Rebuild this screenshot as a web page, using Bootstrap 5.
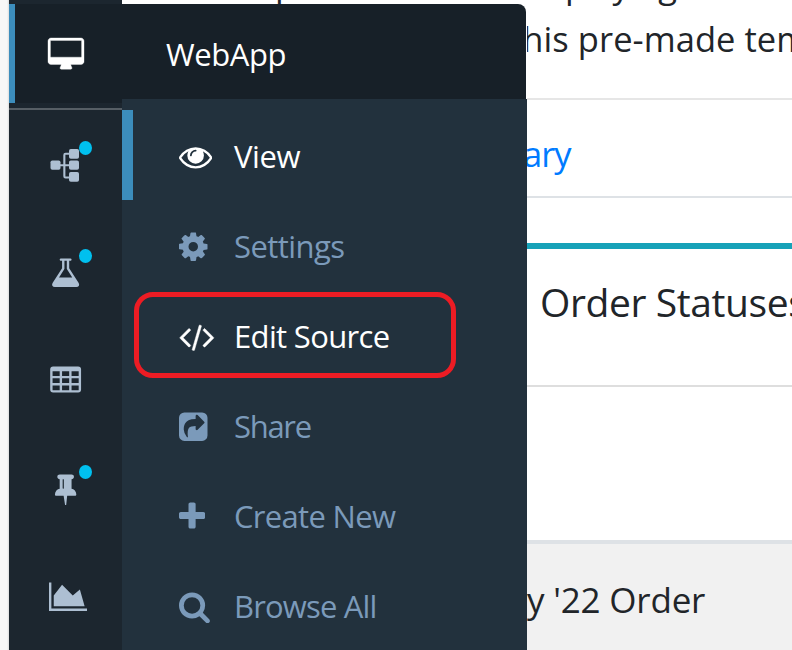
<!DOCTYPE html>
<html lang="en">
<head>
<meta charset="utf-8">
<meta name="viewport" content="width=device-width, initial-scale=1">
<title>WebApp</title>
<link href="https://cdn.jsdelivr.net/npm/bootstrap@5.3.0/dist/css/bootstrap.min.css" rel="stylesheet">
<style>
body{font-family:"Open Sans","Noto Sans",sans-serif;color:#212529;background:#fff;width:792px;height:650px;overflow:hidden}
.gutter{width:9px;background:linear-gradient(90deg,#f7f7f7 7px,#dcdddd)}
.rail{width:113px;background:#1c262f;color:#adbfd2;padding-top:4px}
.rail-item{height:108px;padding-left:1px;padding-top:1px}
.rail-active{height:99px;background:#172028;border-left:6px solid #3c8dbc;color:#fff;padding-right:5px}
.rail-active svg{stroke:#fff;stroke-width:20px;overflow:visible}
.rail-line{height:2px;background:#565e65;margin:5px 0 0}
.dot{position:absolute;left:70px;top:31px;width:13px;height:14px;border-radius:50%;background:#00c0ef}
svg{fill:currentColor;display:block}
.flyout{position:absolute;left:122px;top:4px;width:405px;height:646px;background:#22313d;border-top-right-radius:8px}
.fly-wrap{background:#fff;height:95px}
.fly-head{width:404px;height:95px;background:#172028;border-top-right-radius:8px;color:#fff;padding-left:44px;padding-top:6px}
.fly-list{padding-top:11px}
.fly-item{height:90px;color:#7b9aba;border-left:11px solid transparent;padding-left:46px;font-size:31px}
.fly-item.current{border-left-color:#3c8dbc}
.fly-item.lit{color:#fff}
.fly-item .ico{width:55px;padding-top:3px}
.fly-item .ico svg{height:33.25px}
.fly-item .label{padding-top:3px}
.ring{position:absolute;left:12px;top:288px;width:322px;height:86px;border:5px solid #ed1c24;border-radius:19px}
.label{white-space:nowrap;line-height:1}
.t-web{font-size:31px;letter-spacing:-.4px}
.t-view{letter-spacing:-.4px}
.t-settings{letter-spacing:-.55px}
.t-edit{letter-spacing:-.65px}
.t-share{letter-spacing:-1.3px}
.t-create{letter-spacing:-.68px}
.t-browse{letter-spacing:-.85px}
.t-n{letter-spacing:-.5px}
.page{white-space:nowrap}
.intro{height:100px;border-bottom:2px solid #e6e6e6;font-size:34.5px;line-height:54px}
.intro .one{margin-top:-42px;height:54px;padding-left:153px}
.intro .one span+span{margin-left:269px}
.intro .two{padding-left:388px;letter-spacing:.05px}
.tabs{height:98px;border-bottom:2px solid #dee2e6;padding-left:401px;color:#007bff;font-size:34.5px;padding-top:12px;letter-spacing:-1px}
.stat{margin-top:45px;height:144px;border-top:6px solid #17a2b8;border-bottom:2px solid #dedede;padding-left:418px;font-size:39px;padding-bottom:32px}
.t-stat{letter-spacing:-.4px}
.blank{height:153px}
.foot{height:110px;border-top:4px solid #dee2e6;background:#f1f1f1;padding-left:391px;font-size:35px;padding-top:5px}
.t-foot{letter-spacing:-.2px}
</style>
<script src="https://cdn.jsdelivr.net/npm/bootstrap@5.3.0/dist/js/bootstrap.bundle.min.js"></script>
</head>
<body class="d-flex position-relative">
<div class="gutter flex-shrink-0"></div>
<nav class="rail flex-shrink-0">
  <div class="rail-active d-flex align-items-center justify-content-center"><svg width="36" height="31.2" viewBox="0 0 1920 1664"><path fill-rule="evenodd" d="M1792 992v-832q0-13-9.5-22.5t-22.5-9.5h-1600q-13 0-22.5 9.5t-9.5 22.5v832q0 13 9.5 22.5t22.5 9.5h1600q13 0 22.5-9.5t9.5-22.5zm128-832v1088q0 66-47 113t-113 47h-544q0 37 16 77.5t32 71 16 43.5q0 26-19 45t-45 19h-512q-26 0-45-19t-19-45q0-14 16-44t32-70 16-78h-544q-66 0-113-47t-47-113v-1088q0-66 47-113t113-47h1600q66 0 113 47t47 113z"/></svg></div>
  <div class="rail-line"></div>
  <div class="rail-item position-relative d-flex align-items-center justify-content-center"><svg width="32" height="34" viewBox="0 0 32 34"><rect x="0.5" y="12.500" width="10" height="9.300" rx="1.800"/><rect x="19" y="1" width="10" height="9.800" rx="1.800"/><rect x="19" y="12.500" width="10" height="9.300" rx="1.800"/><rect x="19" y="24" width="10" height="9.800" rx="1.800"/><path d="M10 16.200h10v2H10zM13.300 7q0-2.200 2.200-2.200H20v2h-4.600v21.600H20v2h-4.500q-2.200 0-2.200-2.200z"/></svg><span class="dot"></span></div>
  <div class="rail-item position-relative d-flex align-items-center justify-content-center"><svg width="33.25" height="33.25" viewBox="0 0 1792 1792"><path fill-rule="evenodd" d="M1591 1448q56 89 21.500 152.500t-140.500 63.500h-1152q-106 0-140.500-63.500t21.500-152.500l503-793v-399h-64q-26 0-45-19t-19-45 19-45 45-19h512q26 0 45 19t19 45-19 45-45 19h-64v399zm-779-725l-272 429h712l-272-429-20-31v-436h-128v436z"/></svg><span class="dot"></span></div>
  <div class="rail-item d-flex align-items-center justify-content-center"><svg width="33.25" height="33.25" viewBox="0 0 1792 1792"><path fill-rule="evenodd" d="M224 128h1344q160 0 160 160v1088q0 160-160 160h-1344q-160 0-160-160v-1088q0-160 160-160zM192 384v256h384v-256zM704 384v256h384v-256zM1216 384v256h384v-256zM192 768v256h384v-256zM704 768v256h384v-256zM1216 768v256h384v-256zM192 1152v256h384v-256zM704 1152v256h384v-256zM1216 1152v256h384v-256z"/></svg></div>
  <div class="rail-item position-relative d-flex align-items-center justify-content-center"><svg width="33.25" height="33.25" viewBox="0 0 1792 1792"><path fill-rule="evenodd" d="M800 864v-448q0-14-9-23t-23-9-23 9-9 23v448q0 14 9 23t23 9 23-9 9-23zm672 352q0 26-19 45t-45 19h-429l-51 483q-2 12-10.500 20.500t-20.500 8.500h-1q-27 0-32-27l-76-485h-404q-26 0-45-19t-19-45q0-123 78.500-221.500t177.500-98.500v-512q-52 0-90-38t-38-90 38-90 90-38h640q52 0 90 38t38 90-38 90-90 38v512q99 0 177.500 98.500t78.500 221.500z"/></svg><span class="dot"></span></div>
  <div class="rail-item ps-1 d-flex align-items-center justify-content-center"><svg width="38" height="33.25" viewBox="0 0 2048 1792"><path d="M2048 1536v128h-2048v-1536h128v1408h1920zm-384-1024l256 896h-1664v-576l448-576 576 576z"/></svg></div>
</nav>
<main class="page flex-grow-1 overflow-hidden">
  <div class="intro overflow-hidden">
    <div class="one d-flex"><span>p</span><span class="t-n">playing</span></div>
    <div class="two">this pre-made template</div>
  </div>
  <div class="tabs d-flex align-items-center"><span class="label">ary</span></div>
  <div class="stat d-flex align-items-center"><span class="label t-stat">Order Statuses</span></div>
  <div class="blank"></div>
  <div class="foot d-flex align-items-center"><span class="label t-foot">ry '22 Order</span></div>
</main>
<aside class="flyout">
  <div class="fly-wrap"><div class="fly-head d-flex align-items-center"><span class="label t-web">WebApp</span></div></div>
  <div class="fly-list">
    <div class="fly-item current lit d-flex align-items-center"><span class="ico"><svg viewBox="0 0 1792 1792"><path fill-rule="evenodd" d="M1664 960q-152-236-381-353 61 104 61 225 0 185-131.500 316.500t-316.500 131.500-316.500-131.500-131.500-316.500q0-121 61-225-229 117-381 353 133 205 333.500 326.500t434.500 121.500 434.500-121.500 333.500-326.500zm-720-384q0-20-14-34t-34-14q-125 0-214.500 89.500t-89.500 214.500q0 20 14 34t34 14 34-14 14-34q0-86 61-147t147-61q20 0 34-14t14-34zm848 384q0 34-20 69-140 230-376.500 368.500t-499.500 138.500-499.500-139-376.500-368q-20-35-20-69t20-69q140-229 376.500-368t499.500-139 499.500 139 376.500 368q20 35 20 69z"/></svg></span><span class="label t-view">View</span></div>
    <div class="fly-item d-flex align-items-center"><span class="ico"><svg viewBox="128 0 1536 1792"><path fill-rule="evenodd" d="M1152 896q0-106-75-181t-181-75-181 75-75 181 75 181 181 75 181-75 75-181zm512-109v222q0 12-8 23t-20 13l-185 28q-19 54-39 91 35 50 107 138 10 12 10 25t-9 23q-27 37-99 108t-94 71q-12 0-26-9l-138-108q-44 23-91 38-16 136-29 186-7 28-36 28h-222q-14 0-24.500-8.500t-11.500-21.500l-28-184q-49-16-90-37l-141 107q-10 9-25 9-14 0-25-11-126-114-165-168-7-10-7-23 0-12 8-23 15-21 51-66.500t54-70.500q-27-50-41-99l-183-27q-13-2-21-12.500t-8-23.500v-222q0-12 8-23t19-13l186-28q14-46 39-92-40-57-107-138-10-12-10-24 0-10 9-23 26-36 98.500-107.500t94.500-71.500q13 0 26 10l138 107q44-23 91-38 16-136 29-186 7-28 36-28h222q14 0 24.500 8.500t11.500 21.500l28 184q49 16 90 37l142-107q9-9 24-9 13 0 25 10 129 119 165 170 7 8 7 22 0 12-8 23-15 21-51 66.500t-54 70.500q26 50 41 98l183 28q13 2 21 12.500t8 23.500z"/></svg></span><span class="label t-settings">Settings</span></div>
    <div class="fly-item lit d-flex align-items-center"><span class="ico"><svg viewBox="0 0 1920 1792"><path stroke="currentColor" stroke-width="25" d="M617 1399l-50 50q-10 10-23 10t-23-10l-466-466q-10-10-10-23t10-23l466-466q10-10 23-10t23 10l50 50q10 10 10 23t-10 23l-393 393 393 393q10 10 10 23t-10 23zm591-1067l-373 1291q-4 13-15.500 19.500t-23.500 2.500l-62-17q-13-4-19.500-15.500t-2.500-24.500l373-1291q4-13 15.500-19.500t23.500-2.500l62 17q13 4 19.500 15.500t2.500 24.500zm657 651l-466 466q-10 10-23 10t-23-10l-50-50q-10-10-10-23t10-23l393-393-393-393q-10-10-10-23t10-23l50-50q10-10 23-10t23 10l466 466q10 10 10 23t-10 23z"/></svg></span><span class="label t-edit">Edit Source</span></div>
    <div class="fly-item d-flex align-items-center"><span class="ico"><svg viewBox="128 0 1536 1792"><path fill-rule="evenodd" d="M1664 416v960q0 119-84.500 203.500t-203.500 84.500h-960q-119 0-203.500-84.500t-84.500-203.500v-960q0-119 84.500-203.500t203.500-84.500h960q119 0 203.500 84.500t84.500 203.500zM1133 1069l352-352q19-19 19-45t-19-45l-352-352q-30-31-69-14-40 17-40 59v160q-119 0-216 19.500t-162.500 51-114 79-76.500 95.500-44.500 109-21.500 111.500-5 110.500q0 181 167 404 11 12 25 12 7 0 13-3 22-9 19-33-44-354 62-473 46-52 130-75.500t224-23.500v160q0 42 40 59 12 5 24 5 26 0 45-19z"/></svg></span><span class="label t-share">Share</span></div>
    <div class="fly-item d-flex align-items-center"><span class="ico"><svg viewBox="192 0 1408 1792"><path d="M1600 736v192q0 40-28 68t-68 28h-416v416q0 40-28 68t-68 28h-192q-40 0-68-28t-28-68v-416h-416q-40 0-68-28t-28-68v-192q0-40 28-68t68-28h416v-416q0-40 28-68t68-28h192q40 0 68 28t28 68v416h416q40 0 68 28t28 68z"/></svg></span><span class="label t-create">Create New</span></div>
    <div class="fly-item d-flex align-items-center"><span class="ico"><svg viewBox="64 0 1664 1792"><path fill-rule="evenodd" d="M1216 832q0-185-131.500-316.500t-316.500-131.500-316.500 131.500-131.500 316.500 131.500 316.500 316.500 131.500 316.500-131.500 131.500-316.500zm512 832q0 52-38 90t-90 38q-54 0-90-38l-343-342q-179 124-399 124-143 0-273.500-55.500t-225-150-150-225-55.500-273.500 55.500-273.500 150-225 225-150 273.500-55.500 273.500 55.500 225 150 150 225 55.500 273.500q0 220-124 399l343 343q37 37 37 90z"/></svg></span><span class="label t-browse">Browse All</span></div>
  </div>
  <div class="ring"></div>
</aside>
</body>
</html>
